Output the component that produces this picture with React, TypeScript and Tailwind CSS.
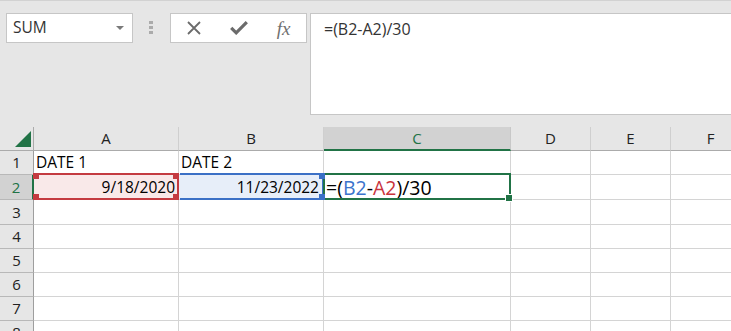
import React from "react";

const cols = [
  { id: "A", w: "w-[145px]" },
  { id: "B", w: "w-[145px]" },
  { id: "C", w: "w-[187px]" },
  { id: "D", w: "w-[80px]" },
  { id: "E", w: "w-[80px]" },
  { id: "F", w: "w-[80px]" },
];

const rowHeights = ["h-[24px]", "h-[25px]", "h-[25px]", "h-[24px]", "h-[24px]", "h-[24px]", "h-[24px]", "h-[24px]"];

const cellFont = "font-['Open_Sans',sans-serif] text-[15.5px] leading-[21px] text-black";

const Square = ({ className }: { className: string }) => (
  <div className={`absolute w-[6px] h-[6px] z-10 ${className}`} />
);

const NameBox = () => (
  <div className="ml-[6px] w-[127px] h-[30px] bg-white border border-[#c6c6c6] flex items-center justify-between pl-[6px] pr-[8px]">
    <span className="text-[15.5px] text-[#333]">SUM</span>
    <div className="w-0 h-0 border-l-[4px] border-r-[4px] border-t-[4px] border-l-transparent border-r-transparent border-t-[#7a7a7a]" />
  </div>
);

const FormulaButtons = () => (
  <div className="ml-[17px] w-[137px] h-[30px] bg-white border border-[#c6c6c6] flex items-center">
    <div className="flex-1 flex justify-center">
      <svg width="14" height="14" viewBox="0 0 14 14">
        <path d="M1 1L13 13M13 1L1 13" stroke="#6b6b6b" strokeWidth="1.8" fill="none" />
      </svg>
    </div>
    <div className="flex-1 flex justify-center">
      <svg width="18" height="14" viewBox="0 0 18 14">
        <path d="M1.2 6.8L6.2 11.8L16.8 1.2" stroke="#6b6b6b" strokeWidth="3.2" fill="none" />
      </svg>
    </div>
    <div className="flex-1 flex justify-center">
      <span className="font-['Liberation_Serif',serif] italic text-[19px] leading-none text-[#707070]">fx</span>
    </div>
  </div>
);

const TopBar = () => (
  <div className="h-[127px] bg-[#e6e6e6] border-t border-[#d2d2d2] flex items-start pt-[12px] font-['Open_Sans',sans-serif]">
    <NameBox />
    <div className="ml-[16px] mt-[8px] flex flex-col gap-[2px]">
      <div className="w-[4px] h-[3px] bg-[#ababab]" />
      <div className="w-[4px] h-[3px] bg-[#ababab]" />
      <div className="w-[4px] h-[3px] bg-[#ababab]" />
    </div>
    <FormulaButtons />
    <div className="ml-[3px] flex-1 h-[102px] bg-white border border-r-0 border-[#c6c6c6] pl-[13px] pt-[3px]">
      <span className="text-[16px] leading-[22px] text-[#333]">=(B2-A2)/30</span>
    </div>
  </div>
);

const HeaderRow = () => (
  <div className="flex h-[24px] font-['Open_Sans',sans-serif] text-[15px]">
    <div className="w-[34px] shrink-0 bg-[#e6e6e6] border-r border-b border-[#ababab] flex justify-end items-end pr-[2px] pb-[3px]">
      <svg width="16" height="16" viewBox="0 0 16 16">
        <polygon points="16,0 16,16 0,16" fill="#217346" />
      </svg>
    </div>
    {cols.map((c) =>
      c.id === "C" ? (
        <div
          key={c.id}
          className={`${c.w} shrink-0 bg-[#d2d2d2] border-r border-r-[#c8c8c8] border-b-2 border-b-[#217346] flex items-center justify-center text-[#217346]`}
        >
          {c.id}
        </div>
      ) : (
        <div
          key={c.id}
          className={`${c.w} shrink-0 bg-[#e6e6e6] border-r border-r-[#cfcfcf] border-b border-b-[#ababab] flex items-center justify-center text-[#222]`}
        >
          {c.id}
        </div>
      )
    )}
  </div>
);

const RowHeader = ({ n }: { n: number }) =>
  n === 2 ? (
    <div className="w-[34px] shrink-0 bg-[#d2d2d2] border-r-2 border-r-[#217346] border-b border-b-[#b8b8b8] flex items-center justify-center text-[15px] text-[#217346] font-['Open_Sans',sans-serif]">
      {n}
    </div>
  ) : (
    <div className="w-[34px] shrink-0 bg-[#e6e6e6] border-r border-r-[#9e9e9e] border-b border-b-[#b8b8b8] flex items-center justify-center text-[15px] text-[#222] font-['Open_Sans',sans-serif]">
      {n}
    </div>
  );

const cellBase = "shrink-0 border-r border-b border-[#d4d4d4]";

const Row1 = () => (
  <>
    <div className={`w-[145px] ${cellBase} flex items-end pl-[2px] pb-[1px] ${cellFont}`}>DATE 1</div>
    <div className={`w-[145px] ${cellBase} flex items-end pl-[2px] pb-[1px] ${cellFont}`}>DATE 2</div>
    <div className={`w-[187px] ${cellBase}`} />
    <div className={`w-[80px] ${cellBase}`} />
    <div className={`w-[80px] ${cellBase}`} />
    <div className={`w-[80px] ${cellBase}`} />
  </>
);

const Row2 = () => (
  <>
    <div className={`relative w-[145px] ${cellBase} bg-[#f9e9e9] flex items-end justify-end pr-[3px] pb-[1px] ${cellFont}`}>
      9/18/2020
      <div className="absolute left-0 -right-[1px] -top-[2px] -bottom-[1px] border-2 border-l-0 border-[#c43b41]">
        <Square className="-left-[1px] -top-[2px] w-[4px] bg-[#c43b41]" />
        <Square className="-right-[2px] -top-[2px] bg-[#c43b41]" />
        <Square className="-left-[1px] -bottom-[2px] w-[4px] bg-[#c43b41]" />
        <Square className="-right-[2px] -bottom-[2px] bg-[#c43b41]" />
      </div>
    </div>
    <div className={`relative w-[145px] ${cellBase} bg-[#e7eef9] flex items-end justify-end pr-[4px] pb-[1px] ${cellFont}`}>
      11/23/2022
      <div className="absolute left-[1px] -right-[1px] -top-[2px] -bottom-[1px] border-2 border-l-0 border-[#3b70c6]">
        <Square className="-right-[3px] -top-[2px] bg-[#3b70c6]" />
        <Square className="-right-[3px] -bottom-[2px] bg-[#3b70c6]" />
      </div>
    </div>
    <div className={`relative w-[187px] ${cellBase} flex items-end pl-[2px] font-['Open_Sans',sans-serif] text-[19.5px] leading-[22px] text-black`}>
      <span>
        =(<span className="text-[#3b74cc]">B2</span>-<span className="text-[#c8333b]">A2</span>)/30
      </span>
      <div className="absolute -left-[1px] -right-[1px] -top-[2px] -bottom-[1px] border-2 border-[#217346]">
        <div className="absolute -right-[4px] -bottom-[4px] w-[8px] h-[8px] bg-[#217346] border border-white z-10" />
      </div>
    </div>
    <div className={`w-[80px] ${cellBase}`} />
    <div className={`w-[80px] ${cellBase}`} />
    <div className={`w-[80px] ${cellBase}`} />
  </>
);

const EmptyRow = () => (
  <>
    {cols.map((c) => (
      <div key={c.id} className={`${c.w} ${cellBase}`} />
    ))}
  </>
);

export default function App() {
  return (
    <div className="w-[731px] h-[331px] overflow-hidden bg-white">
      <TopBar />
      <HeaderRow />
      {rowHeights.map((h, i) => (
        <div key={i} className={`flex ${h}`}>
          <RowHeader n={i + 1} />
          {i === 0 ? <Row1 /> : i === 1 ? <Row2 /> : <EmptyRow />}
        </div>
      ))}
    </div>
  );
}
